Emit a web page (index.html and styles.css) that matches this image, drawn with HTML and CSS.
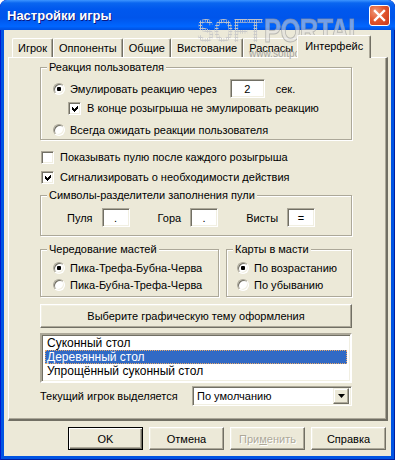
FILE: index.html
```html
<!DOCTYPE html>
<html lang="ru">
<head>
    <meta charset="UTF-8" />
    <title>Настройки игры</title>
    <link rel="stylesheet" href="styles.css">
</head>
<body>
    <div class="window">
        <div class="titlebar">
            <span class="title">Настройки игры</span>
            <span class="close">
                <svg width="13" height="13" viewBox="0 0 13 13">
                    <path d="M2 2 L11 11 M11 2 L2 11" stroke="#fff" stroke-width="2.4" stroke-linecap="square" />
                </svg>
            </span>
        </div>

        <div class="client">
            <div class="tabs">
                <div class="tab">Игрок</div>
                <div class="tab">Оппоненты</div>
                <div class="tab">Общие</div>
                <div class="tab">Вистование</div>
                <div class="tab">Распасы</div>
                <div class="tab active">Интерфейс</div>
            </div>

            <div class="panel">
                <fieldset class="group">
                    <legend>Реакция пользователя</legend>
                    <div class="group-body reaction">
                        <div class="row row-tall">
                            <span class="radio checked"></span>
                            <span class="label">Эмулировать реакцию через</span>
                            <span class="field field-delay">2</span>
                            <span class="unit">сек.</span>
                        </div>
                        <div class="row row-sub">
                            <span class="check checked">
                                <svg width="9" height="9" viewBox="0 0 9 9"><polygon points="1,3 3,5 7,1 7,4 3,8 1,6" fill="#000" shape-rendering="crispEdges" /></svg>
                            </span>
                            <span class="label">В конце розыгрыша не эмулировать реакцию</span>
                        </div>
                        <div class="row row-last">
                            <span class="radio"></span>
                            <span class="label">Всегда ожидать реакции пользователя</span>
                        </div>
                    </div>
                </fieldset>

                <div class="row option first">
                    <span class="check"></span>
                    <span class="label">Показывать пулю после каждого розыгрыша</span>
                </div>
                <div class="row option">
                    <span class="check checked">
                        <svg width="9" height="9" viewBox="0 0 9 9"><polygon points="1,3 3,5 7,1 7,4 3,8 1,6" fill="#000" shape-rendering="crispEdges" /></svg>
                    </span>
                    <span class="label">Сигнализировать о необходимости действия</span>
                </div>

                <fieldset class="group separators">
                    <legend>Символы-разделители заполнения пули</legend>
                    <div class="group-body">
                        <div class="row row-tall">
                            <span class="sep-label">Пуля</span>
                            <span class="field field-sep">.</span>
                            <span class="sep-label">Гора</span>
                            <span class="field field-sep">.</span>
                            <span class="sep-label">Висты</span>
                            <span class="field field-sep">=</span>
                        </div>
                    </div>
                </fieldset>

                <div class="pair">
                    <fieldset class="group suits">
                        <legend>Чередование мастей</legend>
                        <div class="group-body">
                            <div class="row row-radio">
                                <span class="radio checked"></span>
                                <span class="label">Пика-Трефа-Бубна-Черва</span>
                            </div>
                            <div class="row row-radio">
                                <span class="radio"></span>
                                <span class="label">Пика-Бубна-Трефа-Черва</span>
                            </div>
                        </div>
                    </fieldset>
                    <fieldset class="group order">
                        <legend>Карты в масти</legend>
                        <div class="group-body">
                            <div class="row row-radio">
                                <span class="radio checked"></span>
                                <span class="label">По возрастанию</span>
                            </div>
                            <div class="row row-radio">
                                <span class="radio"></span>
                                <span class="label">По убыванию</span>
                            </div>
                        </div>
                    </fieldset>
                </div>

                <div class="button theme-btn">Выберите графическую тему оформления</div>

                <div class="listbox">
                    <div class="item">Суконный стол</div>
                    <div class="item selected">Деревянный стол</div>
                    <div class="item">Упрощённый суконный стол</div>
                </div>

                <div class="combo-row">
                    <span class="label">Текущий игрок выделяется</span>
                    <div class="combo">
                        <span class="combo-text">По умолчанию</span>
                        <span class="combo-btn">
                            <svg width="7" height="4" viewBox="0 0 7 4"><polygon points="0,0 7,0 3.5,4" fill="#000" /></svg>
                        </span>
                    </div>
                </div>
            </div>

            <div class="buttons">
                <div class="button default">OK</div>
                <div class="button">Отмена</div>
                <div class="button disabled">При<u>м</u>енить</div>
                <div class="button">Справка</div>
            </div>
        </div>

        <!-- watermark from the screenshot -->
        <div class="watermark">
            <div class="wm-logo"><span class="wm-soft">SOFT</span><span class="wm-portal">PORTAL</span></div>
            <div class="wm-url">www.softportal.com</div>
        </div>
    </div>
</body>
</html>
```

FILE: styles.css
```css
body {
    margin: 0;
    background: #ffffff;
    font-family: "Liberation Sans", Arial, sans-serif;
    font-size: 11px;
    color: #000;
}

.window {
    position: relative;
    width: 395px;
    height: 460px;
    box-sizing: border-box;
    padding: 0 4px 4px;
    background: #0054e3;
    border-radius: 7px 7px 0 0;
    box-shadow: inset 1px 0 0 #0019cf, inset -1px 0 0 #001ea0, inset 0 -1px 0 #001ea0;
    overflow: hidden;
}

.titlebar {
    height: 30px;
    margin: 0 -4px;
    padding: 0 5px 0 7px;
    display: flex;
    align-items: center;
    justify-content: space-between;
    border-radius: 7px 7px 0 0;
    background: linear-gradient(to bottom, #3d95ff 0%, #0a66f0 10%, #0058ee 30%, #0055eb 60%, #0066ff 88%, #0050e0 100%);
}

.title {
    color: #fff;
    font-weight: bold;
    font-size: 13px;
    text-shadow: 1px 1px 0 #0a1883;
}

.close {
    width: 19px;
    height: 19px;
    border: 1px solid #fff;
    border-radius: 3px;
    background: radial-gradient(circle at 30% 30%, #f09a7a 0%, #e2582f 45%, #c7361a 100%);
    display: flex;
    align-items: center;
    justify-content: center;
    margin-top: 1px;
}

.client {
    height: 426px;
    background: #ece9d8;
    padding-top: 5px;
    box-sizing: border-box;
}

/* tabs */
.tabs {
    display: flex;
    align-items: flex-end;
    height: 22px;
    margin-left: 8px;
}

.tab {
    height: 19px;
    line-height: 18px;
    padding: 0 5px;
    box-sizing: border-box;
    background: #ece9d8;
    border-left: 1px solid #fff;
    border-top: 1px solid #fff;
    border-right: 1px solid #716f64;
    box-shadow: inset -1px 0 0 #aca899;
    border-radius: 2px 2px 0 0;
}

.tab.active {
    position: relative;
    z-index: 1;
    height: 23px;
    line-height: 20px;
    margin: 0 -2px -1px;
    padding: 0 7px;
}

.panel {
    position: relative;
    width: 380px;
    height: 364px;
    margin-left: 4px;
    box-sizing: border-box;
    padding: 3px 34px 0 31px;
    border-left: 1px solid #fff;
    border-top: 1px solid #fff;
    border-right: 2px solid #716f64;
    border-bottom: 2px solid #716f64;
    box-shadow: inset -1px -1px 0 #aca899;
}

/* group boxes */
.group {
    margin: 0;
    padding: 5px 4px 1px 6px;
    border: 1px solid #aca899;
    box-shadow: inset 1px 1px 0 #fff, 1px 1px 0 #fff;
    min-width: 0;
}

.group legend {
    padding: 0 2px;
    line-height: 13px;
    background: #ece9d8;
}

.group-body {
    padding-left: 6px;
}

.row {
    display: flex;
    align-items: center;
    white-space: nowrap;
}

.row-tall {
    height: 19px;
}

.row-sub {
    height: 16px;
    margin-top: 2px;
    padding-left: 15px;
}

.row-last {
    height: 16px;
    margin-top: 6px;
}

.radio {
    width: 12px;
    height: 12px;
    box-sizing: border-box;
    border-radius: 50%;
    background: #fff;
    border: 1px solid;
    border-color: #aca899 #fff #fff #aca899;
    box-shadow: inset 1px 1px 0 #716f64, inset -1px -1px 0 #f1efe2;
    display: flex;
    align-items: center;
    justify-content: center;
    flex: none;
}

.radio.checked::after {
    content: "";
    width: 4px;
    height: 4px;
    border-radius: 1px;
    background: #000;
}

.radio + .label {
    margin-left: 5px;
}

.check {
    width: 13px;
    height: 13px;
    box-sizing: border-box;
    background: #fff;
    border: 1px solid;
    border-color: #aca899 #fff #fff #aca899;
    box-shadow: inset 1px 1px 0 #716f64, inset -1px -1px 0 #f1efe2;
    display: flex;
    align-items: center;
    justify-content: center;
    flex: none;
}

.check svg {
    margin: 1px 0 0 1px;
}

.check + .label {
    margin-left: 6px;
}

.field {
    height: 19px;
    box-sizing: border-box;
    background: #fff;
    border: 1px solid;
    border-color: #aca899 #fff #fff #aca899;
    box-shadow: inset 1px 1px 0 #716f64, inset -1px -1px 0 #f1efe2;
    display: flex;
    align-items: center;
    justify-content: center;
}

.field-delay {
    width: 35px;
    margin-left: 13px;
}

.unit {
    margin-left: 11px;
}

.option {
    height: 16px;
    margin-top: 4px;
    margin-left: 1px;
}

.option.first {
    margin-top: 9px;
}

.separators {
    margin-top: 4px;
    padding: 6px 4px 8px 6px;
}

.separators .group-body {
    padding-left: 20px;
}

.field-sep {
    width: 28px;
    margin: 0 28px 0 9px;
}

.pair {
    display: flex;
    gap: 7px;
    margin-top: 7px;
}

.suits {
    width: 179px;
    box-sizing: border-box;
    padding: 5px 4px 4px 6px;
}

.order {
    flex: 1;
    padding: 5px 4px 4px 6px;
}

.order .group-body {
    padding-left: 4px;
}

.row-radio {
    height: 14px;
}

.row-radio + .row-radio {
    margin-top: 3px;
}

/* buttons */
.button {
    box-sizing: border-box;
    background: #ece9d8;
    border: 1px solid;
    border-color: #fff #716f64 #716f64 #fff;
    box-shadow: inset -1px -1px 0 #aca899, inset 1px 1px 0 #f1efe2;
    display: flex;
    align-items: center;
    justify-content: center;
}

.theme-btn {
    height: 24px;
    margin-top: 7px;
}

.listbox {
    height: 50px;
    margin-top: 5px;
    box-sizing: border-box;
    padding: 1px 3px;
    background: #fff;
    border: 2px solid;
    border-color: #aca899 #fff #fff #aca899;
    box-shadow: inset 1px 1px 0 #716f64, inset -1px -1px 0 #f1efe2;
}

.item {
    height: 14px;
    line-height: 14px;
    padding-left: 2px;
    font-size: 12px;
}

.item.selected {
    background: #316ac5;
    color: #fff;
    outline: 1px dotted #e8a868;
    outline-offset: -1px;
}

.combo-row {
    display: flex;
    align-items: center;
    justify-content: space-between;
    margin-top: 3px;
}

.combo {
    width: 160px;
    height: 20px;
    box-sizing: border-box;
    background: #fff;
    border: 1px solid;
    border-color: #aca899 #fff #fff #aca899;
    box-shadow: inset 1px 1px 0 #716f64, inset -1px -1px 0 #f1efe2;
    display: flex;
    align-items: center;
    justify-content: space-between;
    padding: 2px;
}

.combo-text {
    padding-left: 2px;
}

.combo-btn {
    width: 16px;
    height: 16px;
    box-sizing: border-box;
    background: #ece9d8;
    border: 1px solid;
    border-color: #f1efe2 #716f64 #716f64 #f1efe2;
    box-shadow: inset -1px -1px 0 #aca899, inset 1px 1px 0 #fff;
    display: flex;
    align-items: center;
    justify-content: center;
}

.buttons {
    display: flex;
    justify-content: flex-end;
    gap: 6px;
    margin-top: 6px;
    padding-right: 5px;
}

.buttons .button {
    width: 75px;
    height: 23px;
}

.buttons .default {
    border: 1px solid #000;
    box-shadow: inset 1px 1px 0 #fff, inset -1px -1px 0 #716f64, inset -2px -2px 0 #aca899;
}

.buttons .disabled {
    color: #aca899;
    text-shadow: 1px 1px 0 #fff;
}

/* watermark */
.watermark {
    position: absolute;
    left: 197px;
    top: 14px;
    pointer-events: none;
}

.wm-logo {
    font-size: 33px;
    font-weight: bold;
    line-height: 34px;
    letter-spacing: -1px;
    white-space: nowrap;
    transform: scaleX(0.78);
    transform-origin: left center;
}

.wm-soft {
    color: transparent;
    background: radial-gradient(circle, rgba(200, 200, 200, 0.95) 50%, transparent 55%);
    background-size: 3px 3px;
    -webkit-background-clip: text;
    background-clip: text;
}

.wm-portal {
    color: rgba(225, 225, 225, 0.5);
    -webkit-text-stroke: 1px rgba(150, 150, 150, 0.6);
    margin-left: 2px;
}

.wm-url {
    margin: 0 0 0 52px;
    font-size: 10px;
    line-height: 11px;
    color: rgba(150, 150, 150, 0.85);
}
```
